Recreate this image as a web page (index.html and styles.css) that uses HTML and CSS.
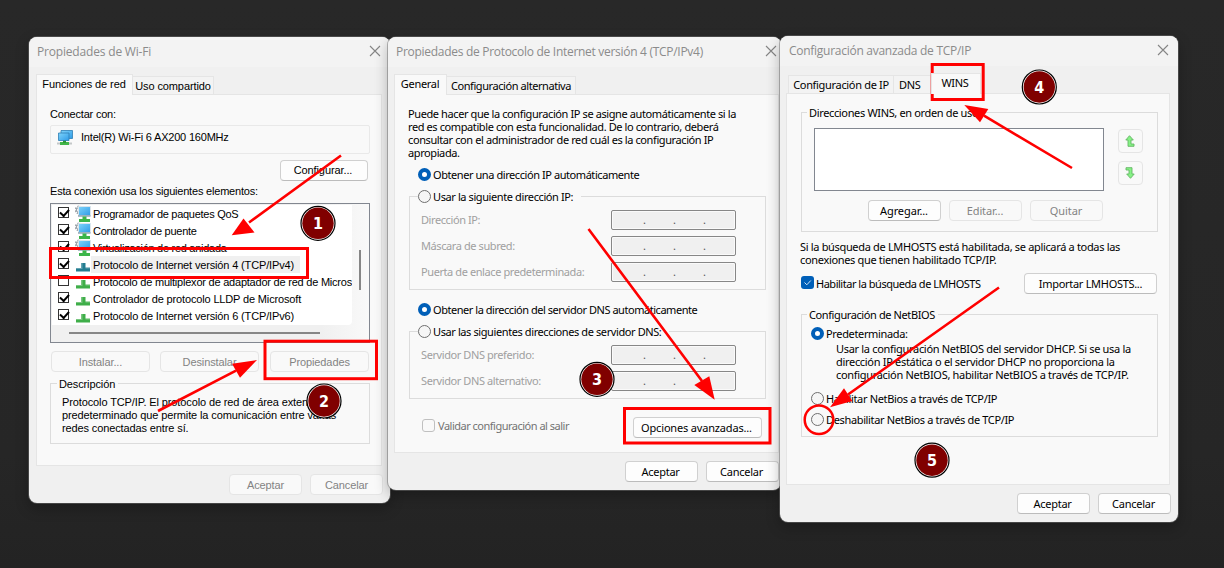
FILE: index.html
```html
<!DOCTYPE html>
<html lang="es">
<head>
<meta charset="utf-8">
<title>Propiedades de Wi-Fi</title>
<link rel="stylesheet" href="styles.css">
</head>
<body>
<svg class="defs" width="0" height="0">
  <defs>
    <symbol id="close" viewBox="0 0 12 12"><path d="M1 1l10 10M11 1L1 11" fill="none" stroke="#858585" stroke-width="1.1"/></symbol>
    <linearGradient id="scr" x1="0" y1="0" x2="1" y2="1"><stop offset="0" stop-color="#7fd4fb"/><stop offset="1" stop-color="#2f9be6"/></linearGradient>
    <symbol id="adapter" viewBox="0 0 16 16">
      <path d="M0 12.500h15v2H0z" fill="#c4c8c9"/><path d="M3 12h9v3H3z" fill="#42b649"/><path d="M6 10h3v3H6z" fill="#2e9a38"/>
      <path d="M4 .5h11.500v8H4z" fill="url(#scr)" stroke="#2d7fb5" stroke-width=".8"/><path d="M1.500 3h10.500v7.500H1.500z" fill="url(#scr)" stroke="#2d7fb5" stroke-width=".8"/>
    </symbol>
    <symbol id="service" viewBox="0 0 16 17">
      <circle cx="4" cy="5" r="3.400" fill="none" stroke="#a3aab0" stroke-width="2" stroke-dasharray="1.800 1"/>
      <circle cx="4" cy="5" r="2.500" fill="none" stroke="#8f979e"/>
      <path d="M3.500 1.500h12v9h-12z" fill="url(#scr)" stroke="#dbe5eb"/><path d="M3 11h12.500" stroke="#5d7d91"/>
      <path d="M7.500 11.500h4v2.500h3.500v3H4v-3h3.500z" fill="#3cb54a"/>
    </symbol>
    <symbol id="proto" viewBox="0 0 14 9"><path d="M5 0h4.500v4.500H14V8.500H0V5h5z" fill="currentColor"/><path d="M5 0h1.500v6H0V5h5zM9.500 4.500H14v1H9.500z" fill="#fff" opacity=".3"/></symbol>
    <symbol id="up" viewBox="0 0 10 12"><path d="M4.500.700L8.300 5H6v4h3v2.300H3V5H.800z" fill="#85f285" stroke="#65b565" stroke-width=".9"/></symbol>
    <symbol id="down" viewBox="0 0 10 12"><path d="M5.500 11.300L1.700 7H4V3H1V.700h6V7h2.200z" fill="#85f285" stroke="#65b565" stroke-width=".9"/></symbol>
  </defs>
</svg>

<main class="desktop">
  <section class="window wifi">
    <header class="titlebar"><span>Propiedades de Wi-Fi</span><svg class="close"><use href="#close"/></svg></header>
    <nav class="tabs"><span class="tab active">Funciones de red</span><span class="tab">Uso compartido</span></nav>
    <div class="panel">
      <p class="label">Conectar con:</p>
      <div class="device"><svg class="device-icon"><use href="#adapter"/></svg><span>Intel(R) Wi-Fi 6 AX200 160MHz</span></div>
      <div class="configure"><span class="btn">Configurar...</span></div>
      <p class="label">Esta conexión usa los siguientes elementos:</p>
      <div class="listbox">
        <ul class="items">
          <li><i class="tick on"></i><svg class="service"><use href="#service"/></svg><span>Programador de paquetes QoS</span></li>
          <li><i class="tick on"></i><svg class="service"><use href="#service"/></svg><span>Controlador de puente</span></li>
          <li><i class="tick on"></i><svg class="service"><use href="#service"/></svg><span>Virtualización de red anidada</span></li>
          <li class="selected"><i class="tick on"></i><svg class="proto"><use href="#proto"/></svg><span>Protocolo de Internet versión 4 (TCP/IPv4)</span></li>
          <li><i class="tick"></i><svg class="proto"><use href="#proto"/></svg><span>Protocolo de multiplexor de adaptador de red de Micros</span></li>
          <li><i class="tick on"></i><svg class="proto"><use href="#proto"/></svg><span>Controlador de protocolo LLDP de Microsoft</span></li>
          <li><i class="tick on"></i><svg class="proto"><use href="#proto"/></svg><span>Protocolo de Internet versión 6 (TCP/IPv6)</span></li>
        </ul>
        <div class="vbar"></div>
        <div class="hbar"></div>
      </div>
      <div class="actions"><span class="btn off">Instalar...</span><span class="btn off">Desinstalar</span><span class="btn off">Propiedades</span></div>
      <div class="group"><span class="legend">Descripción</span>
        <p>Protocolo TCP/IP. El protocolo de red de área extensa<br>predeterminado que permite la comunicación entre varias<br>redes conectadas entre sí.</p>
      </div>
    </div>
    <footer><span class="btn off">Aceptar</span><span class="btn off">Cancelar</span></footer>
  </section>

  <section class="window ipv4">
    <header class="titlebar"><span>Propiedades de Protocolo de Internet versión 4 (TCP/IPv4)</span><svg class="close"><use href="#close"/></svg></header>
    <nav class="tabs"><span class="tab active">General</span><span class="tab">Configuración alternativa</span></nav>
    <div class="panel">
      <p class="intro">Puede hacer que la configuración IP se asigne automáticamente si la<br>red es compatible con esta funcionalidad. De lo contrario, deberá<br>consultar con el administrador de red cuál es la configuración IP<br>apropiada.</p>
      <div class="option"><i class="radio on"></i><span>Obtener una dirección IP automáticamente</span></div>
      <div class="group address">
        <div class="legend option"><i class="radio"></i><span>Usar la siguiente dirección IP:</span></div>
        <div class="field"><span>Dirección IP:</span><div class="ip"><b>.</b><b>.</b><b>.</b></div></div>
        <div class="field"><span>Máscara de subred:</span><div class="ip"><b>.</b><b>.</b><b>.</b></div></div>
        <div class="field"><span>Puerta de enlace predeterminada:</span><div class="ip"><b>.</b><b>.</b><b>.</b></div></div>
      </div>
      <div class="option dns-auto"><i class="radio on"></i><span>Obtener la dirección del servidor DNS automáticamente</span></div>
      <div class="group dns">
        <div class="legend option"><i class="radio"></i><span>Usar las siguientes direcciones de servidor DNS:</span></div>
        <div class="field"><span>Servidor DNS preferido:</span><div class="ip"><b>.</b><b>.</b><b>.</b></div></div>
        <div class="field"><span>Servidor DNS alternativo:</span><div class="ip"><b>.</b><b>.</b><b>.</b></div></div>
      </div>
      <div class="validate"><i class="check"></i><span>Validar configuración al salir</span><span class="btn">Opciones avanzadas...</span></div>
    </div>
    <footer><span class="btn">Aceptar</span><span class="btn">Cancelar</span></footer>
  </section>

  <section class="window advanced">
    <header class="titlebar"><span>Configuración avanzada de TCP/IP</span><svg class="close"><use href="#close"/></svg></header>
    <nav class="tabs"><span class="tab">Configuración de IP</span><span class="tab">DNS</span><span class="tab active">WINS</span></nav>
    <div class="panel">
      <div class="group wins"><span class="legend">Direcciones WINS, en orden de uso:</span>
        <div class="wins-row"><div class="wins-list"></div>
          <div class="order"><span class="btn off"><svg><use href="#up"/></svg></span><span class="btn off"><svg><use href="#down"/></svg></span></div></div>
        <div class="wins-actions"><span class="btn">Agregar...</span><span class="btn off">Editar...</span><span class="btn off">Quitar</span></div>
      </div>
      <p class="note">Si la búsqueda de LMHOSTS está habilitada, se aplicará a todas las<br>conexiones que tienen habilitado TCP/IP.</p>
      <div class="lmhosts"><i class="check on"><svg viewBox="0 0 13 13"><path d="M3.500 6.500l2.300 2.300 4-4.300"/></svg></i><span>Habilitar la búsqueda de LMHOSTS</span><span class="btn">Importar LMHOSTS...</span></div>
      <div class="group netbios"><span class="legend">Configuración de NetBIOS</span>
        <div class="option"><i class="radio on"></i><span>Predeterminada:</span></div>
        <p>Usar la configuración NetBIOS del servidor DHCP. Si se usa la<br>dirección IP estática o el servidor DHCP no proporciona la<br>configuración NetBIOS, habilitar NetBIOS a través de TCP/IP.</p>
        <div class="option enable"><i class="radio"></i><span>Habilitar NetBios a través de TCP/IP</span></div>
        <div class="option disable"><i class="radio"></i><span>Deshabilitar NetBios a través de TCP/IP</span></div>
      </div>
    </div>
    <footer><span class="btn">Aceptar</span><span class="btn">Cancelar</span></footer>
  </section>

  <svg class="marks" viewBox="0 0 1224 568">
    <g class="outline">
      <rect x="50.500" y="248.500" width="257" height="29"/>
      <rect x="265" y="341.200" width="111.500" height="37.500"/>
      <rect x="624.500" y="408.500" width="145.500" height="34.500"/>
      <rect x="932.200" y="64.500" width="51" height="35"/>
      <circle cx="819" cy="419.700" r="14.300" stroke-width="2.500"/>
      <path stroke-width="2.600" d="M341 155.500L249 222.500M158 411L236 370.700M588.500 229L702 381M1072 168L984 115.700M999 287.500L848 394.500"/>
    </g>
    <g class="heads">
      <path d="M231.700 235.300L243.500 218.500L254.500 232.500z"/>
      <path d="M257 360L232 363.700L240 377.700z"/>
      <path d="M714.700 399.700L694.300 385L709.300 376.300z"/>
      <path d="M964.300 105L988.300 109L980 122.300z"/>
      <path d="M830 407.300L844 388.300L852.300 401z"/>
    </g>
    <g class="badge" transform="translate(318 223.300)"><circle class="ring" r="17"/><circle class="disc" r="15.700"/><text y="6">1</text></g>
    <g class="badge" transform="translate(324 401)"><circle class="ring" r="17"/><circle class="disc" r="15.700"/><text y="6">2</text></g>
    <g class="badge" transform="translate(597 379.300)"><circle class="ring" r="17"/><circle class="disc" r="15.700"/><text y="6">3</text></g>
    <g class="badge" transform="translate(1039.300 87)"><circle class="ring" r="17"/><circle class="disc" r="15.700"/><text y="6">4</text></g>
    <g class="badge" transform="translate(932 460.200)"><circle class="ring" r="17"/><circle class="disc" r="15.700"/><text y="6">5</text></g>
  </svg>
</main>
</body>
</html>
```
FILE: styles.css
```css
* { box-sizing: border-box; }
body { margin: 0; background: #262626; overflow: hidden; }
p, ul { margin: 0; padding: 0; list-style: none; }
.defs { display: block; }
.desktop { position: relative; width: 1224px; height: 568px; overflow: hidden; background: linear-gradient(#282828, #262626 80%, #232323); }

.window {
  position: absolute; top: 37px; border-radius: 8px; background: #f0f0f0; color: #000;
  font: 11px/13px "Noto Sans", sans-serif; letter-spacing: -0.35px; white-space: nowrap;
  box-shadow: 0 0 0 1px rgba(110,110,110,.5), 0 5px 14px rgba(0,0,0,.28);
  display: flex; flex-direction: column;
}
.wifi { left: 29px; width: 361px; height: 466px; font-family: "Liberation Sans", sans-serif; letter-spacing: -0.2px; }
.ipv4 { left: 388px; width: 393px; height: 453px; letter-spacing: -0.43px; }
.advanced { left: 780px; top: 36px; width: 398px; height: 486px; }

.titlebar { height: 30px; flex: none; padding: 0 9px 0 8px; display: flex; align-items: center; justify-content: space-between; background: #f3f3f3; border-radius: 8px 8px 0 0; color: #8b8b8b; font: 12px/16px "Open Sans", sans-serif; letter-spacing: -0.27px; }
.wifi .titlebar { letter-spacing: -0.18px; }
.ipv4 .titlebar { padding-right: 4px; letter-spacing: -0.29px; }
.advanced .titlebar { padding-left: 9px; }
.close { width: 12px; height: 12px; margin-top: -2px; }

.tabs { height: 27px; flex: none; display: flex; align-items: flex-end; padding-left: 7px; }
.tab { height: 18px; border: 1px solid #e5e5e5; border-bottom: 0; background: #f3f3f3; text-align: center; line-height: 18px; width: 82px; margin-left: -1px; }
.tab.active { height: 21px; background: #f9f9f9; margin: 0 0 -1px; position: relative; z-index: 1; line-height: 18px; width: 97px; }
.wifi .tab { letter-spacing: -0.1px; }
.wifi .tab.active { padding-right: 1px; }
.ipv4 .tabs { padding-left: 6px; }
.ipv4 .tab { width: 130px; }
.ipv4 .tab.active { width: 53px; padding-right: 1px; letter-spacing: -0.3px; }
.advanced .tabs { padding-left: 9px; }
.advanced .tab { width: 106px; letter-spacing: -0.32px; }
.advanced .tab + .tab { width: 38px; text-align: left; padding-left: 5px; }
.advanced .tab.active { width: 50px; text-align: center; padding: 0 2px 0 0; margin-left: 0; }

.panel { margin: 0 8px 0 7px; border: 1px solid #e5e5e5; background: #f9f9f9; padding: 12px 11px 0 13px; flex: none; }
.wifi .panel { height: 372px; }
.ipv4 .panel { height: 359px; margin: 0 2px 0 6px; padding: 12px 12px 0 14px; }
.advanced .panel { height: 392px; margin-left: 6px; padding: 18px 11px 0 14px; }

.btn { height: 21px; border: 1px solid #d0d0d0; border-bottom-color: #bcbcbc; border-radius: 4px; background: #fdfdfd; display: flex; align-items: center; justify-content: center; flex: none; letter-spacing: -0.25px; }
.btn.off { border-color: #e5e5e5; background: #f9f9f9; color: #838383; }
.wifi .btn { letter-spacing: -0.1px; }
footer { display: flex; justify-content: flex-end; gap: 8px; padding: 8px 7px 0 0; }
footer .btn { width: 73px; padding-right: 2px; }
.wifi footer .btn { padding: 1px 0 0; }
.ipv4 footer { padding-right: 2px; }

.label { height: 14px; line-height: 14px; }
.device { margin-top: 4px; height: 29px; border: 1px solid #e9e9e9; border-radius: 2px; display: flex; padding: 4px 0 0 6px; gap: 8px; line-height: 15px; }
.device-icon { width: 16px; height: 16px; }
.configure { display: flex; justify-content: flex-end; margin: 6px 2px 3px 0; }
.configure .btn { width: 88px; padding-right: 2px; }

.listbox { margin-top: 5px; height: 140px; border: 1px solid #828790; padding: 1px; background: linear-gradient(90deg, #f0f0f0 85%, #f9f9f9); display: grid; grid-template: 120px 1fr / 300px 1fr; }
.items { background: #fff; overflow: hidden; border-bottom-right-radius: 4px; }
.items li { height: 17px; display: grid; grid-template-columns: 11px 16px 1fr; column-gap: 6px; align-items: center; padding-left: 6px; }
.items li > span { margin-left: -6px; padding: 3px 0 1px 2px; line-height: 13px; justify-self: start; height: 17px; letter-spacing: -0.15px; }
.items .selected > span { background: #f0f0f0; padding-right: 6px; }
.items li:nth-child(-n+3) > span { letter-spacing: -0.28px; }
.items li:nth-child(5) > span { letter-spacing: -0.22px; }
.tick { width: 11px; height: 11px; border: 1px solid #333; background: #fff; position: relative; top: -1px; }
.tick.on::after { content: ""; position: absolute; left: 1px; top: 1px; width: 7px; height: 4px; border: solid #000; border-width: 0 0 2px 2px; transform: rotate(-48deg); }
.service { width: 16px; height: 17px; }
.proto { width: 14px; height: 9px; margin: 6px 0 0 1px; color: #3fae49; }
.selected .proto { color: #247d91; }
.vbar { width: 2px; height: 40px; background: #868686; margin: 45px 0 0 7px; }
.hbar { width: 251px; height: 2px; background: #868686; margin: 7px 0 0 17px; }
.actions { display: flex; gap: 10px; margin: 8px 0 0 1px; }
.actions .btn { width: 99px; padding-top: 1px; }
.actions .btn + .btn + .btn { margin-left: 1px; }

.group { position: relative; border: 1px solid #dcdcdc; }
.legend { position: absolute; top: -7px; left: 5px; padding: 0 3px 0 2px; background: #f9f9f9; }
.wifi .legend { left: 6px; top: -6px; }
.wifi .group { height: 61px; margin-top: 11px; padding: 12px 0 0 11px; letter-spacing: -0.12px; }

.option { display: flex; align-items: center; gap: 2px; height: 13px; }
.radio { width: 13px; height: 13px; border: 1px solid #6f6f6f; border-radius: 50%; background: #f6f6f6; flex: none; }
.radio.on { border: 4px solid #005fb8; background: #fff; }
.check { width: 13px; height: 13px; border: 1px solid #c0c0c0; border-radius: 3px; background: #f9f9f9; flex: none; }
.check.on { border: 0; background: #005fb8; }
.check svg { display: block; fill: none; stroke: #cfe4f7; stroke-width: 1; }
.intro { margin: 0 0 9px -1px; letter-spacing: -0.4px; }
.intro + .option { margin-left: 9px; }
.ipv4 .group { padding: 13px 29px 0 11px; display: flex; flex-direction: column; gap: 6px; }
.ipv4 .legend { padding: 0 8px 0 0; left: 8px; }
.ipv4 .legend > span { margin-top: -1px; letter-spacing: -0.4px; }
.address { height: 94px; margin-top: 15px; }
.dns { height: 68px; margin-top: 15px; }
.dns-auto { margin: 13px 0 0 9px; letter-spacing: -0.46px; }
.dns-auto > span { margin-top: -1px; }
.field { height: 20px; display: flex; justify-content: space-between; align-items: center; color: #a0a0a0; }
.field > span { padding-bottom: 2px; letter-spacing: -0.41px; }
.ip { width: 125px; height: 20px; border: 1px solid #878787; border-radius: 2px; background: #f0f0f0; box-shadow: inset 0 0 0 1px #fafafa; color: #555; display: flex; gap: 27px; padding: 2px 0 0 31px; }
.ip b { width: 3px; font-weight: 400; }
.validate { display: flex; margin: 18px 0 0 13px; color: #737373; gap: 3px; width: 340px; letter-spacing: -0.5px; }
.validate .check { margin-top: 2px; }
.validate > span:not(.btn) { margin-top: 2px; }
.validate .btn { width: 129px; margin-left: auto; color: #000; padding-right: 2px; letter-spacing: -0.17px; }

.wins { height: 120px; padding: 15px 14px 0 12px; }
.wins-row { display: flex; justify-content: space-between; }
.wins-list { width: 290px; height: 63px; border: 1px solid #828790; background: #fff; }
.order { display: flex; flex-direction: column; gap: 8px; margin-top: 1px; }
.order .btn { width: 25px; height: 24px; padding-right: 2px; }
.order svg { width: 10px; height: 12px; }
.wins-actions { display: flex; gap: 8px; margin: 9px 0 0 54px; }
.wins-actions .btn { width: 73px; padding-right: 1px; letter-spacing: -0.1px; }
.note { margin: 8px 0 1px -1px; letter-spacing: -0.33px; }
.lmhosts { display: flex; align-items: center; gap: 2px; margin-top: 7px; width: 356px; letter-spacing: -0.48px; }
.lmhosts .check { margin-top: -2px; }
.lmhosts > span:not(.btn) { margin-top: -1px; }
.lmhosts .btn { width: 133px; margin-left: auto; letter-spacing: -0.3px; }
.netbios { height: 123px; margin-top: 20px; padding: 12px 0 0 9px; }
.netbios .legend { letter-spacing: -0.4px; }
.netbios p { margin: 2px 0 11px 25px; letter-spacing: -0.31px; }
.disable { margin-top: 8px; }

.marks { position: absolute; inset: 0; width: 1224px; height: 568px; }
.outline { fill: none; stroke: #f00; stroke-width: 3; }
.heads { fill: #f00; }
.ring { fill: #fff; stroke: #000; stroke-width: 1.2; }
.disc { fill: #800000; }
.badge text { fill: #fff; font: bold 16px "DejaVu Sans Condensed", "DejaVu Sans", sans-serif; text-anchor: middle; }
```
